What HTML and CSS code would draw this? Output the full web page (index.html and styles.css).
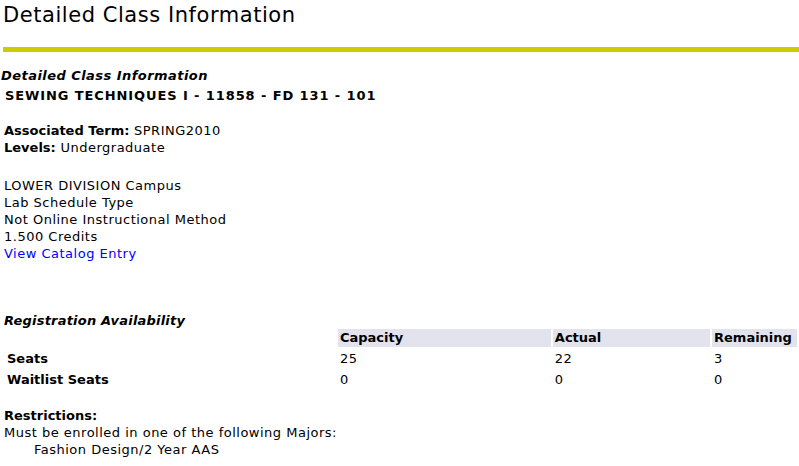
FILE: index.html
```html
<!DOCTYPE html>
<html>
<head>
<meta charset="utf-8">
<title>Detailed Class Information</title>
<link rel="stylesheet" href="styles.css">
</head>
<body>
<h1 class="page-title">Detailed Class Information</h1>
<div class="rule"></div>
<div class="caption caption-top">Detailed Class Information</div>
<div class="class-title">SEWING TECHNIQUES I - 11858 - FD 131 - 101</div>
<div class="info term-block">
  <div><span class="label">Associated Term:</span> SPRING2010</div>
  <div><span class="label">Levels:</span> Undergraduate</div>
</div>
<div class="info detail-block">
  <div>LOWER DIVISION Campus</div>
  <div>Lab Schedule Type</div>
  <div>Not Online Instructional Method</div>
  <div>1.500 Credits</div>
  <div><a class="link" href="#">View Catalog Entry</a></div>
</div>
<div class="caption caption-avail">Registration Availability</div>
<table class="avail">
  <tr class="head-row">
    <td class="c-label"></td>
    <th class="c-cap">Capacity</th>
    <th class="c-act">Actual</th>
    <th class="c-rem">Remaining</th>
  </tr>
  <tr class="data-row">
    <th class="c-label">Seats</th>
    <td>25</td>
    <td>22</td>
    <td>3</td>
  </tr>
  <tr class="data-row">
    <th class="c-label">Waitlist Seats</th>
    <td>0</td>
    <td>0</td>
    <td>0</td>
  </tr>
</table>
<div class="info restrict-block">
  <div class="label">Restrictions:</div>
  <div>Must be enrolled in one of the following Majors:</div>
  <div class="indent">Fashion Design/2 Year AAS</div>
</div>
</body>
</html>
```
FILE: styles.css
```css
html, body {
  margin: 0;
  padding: 0;
  background: #ffffff;
  color: #000000;
  font-family: "DejaVu Sans", Verdana, sans-serif;
}

.page-title {
  margin: 0;
  padding: 3px 0 0 3px;
  font-size: 21px;
  line-height: 24px;
  font-weight: normal;
  letter-spacing: 0.55px;
}

.rule {
  margin: 20px 0 0 3px;
  height: 5px;
  background: #cccc00;
}

.caption {
  font-size: 13px;
  line-height: 17px;
  font-style: italic;
  font-weight: bold;
  letter-spacing: 0.45px;
}

.caption-top {
  margin-top: 15px;
  padding-left: 1px;
}

.class-title {
  margin-top: 3px;
  padding-left: 5px;
  font-size: 13px;
  line-height: 17px;
  font-weight: bold;
  letter-spacing: 0.9px;
}

.info {
  font-size: 13px;
  line-height: 17px;
  padding-left: 4px;
  letter-spacing: 0.5px;
}

.label {
  font-weight: bold;
  letter-spacing: 0;
}

.term-block {
  margin-top: 18px;
}

.detail-block {
  margin-top: 21px;
}

.link {
  color: #0000ff;
  text-decoration: none;
}

.caption-avail {
  margin-top: 50px;
  padding-left: 4px;
  letter-spacing: 0.2px;
}

.avail {
  margin: -2px 0 0 3px;
  width: 796px;
  border-collapse: separate;
  border-spacing: 2px;
  font-size: 13px;
  line-height: 16px;
}

.avail th,
.avail td {
  padding: 0 2px;
  text-align: left;
  vertical-align: middle;
}

.avail td {
  letter-spacing: 0.5px;
}

.head-row {
  height: 18px;
}

.head-row th {
  background: #e3e3ed;
  font-weight: bold;
}

.data-row {
  height: 19px;
}

.data-row th {
  font-weight: bold;
}

.c-label {
  width: 329px;
}

.c-cap {
  width: 210px;
}

.c-act {
  width: 154px;
}

.c-rem {
  width: 81px;
}

.restrict-block {
  margin-top: 16px;
}

.indent {
  padding-left: 30px;
}
```
